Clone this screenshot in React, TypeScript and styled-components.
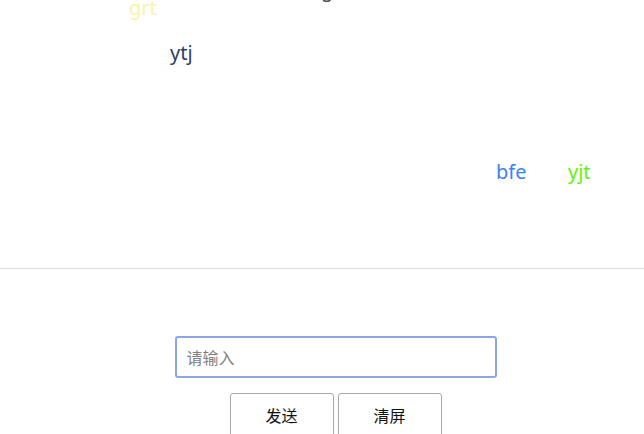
import { useState } from 'react';
import styled, { createGlobalStyle } from 'styled-components';

interface Bullet {
  text: string;
  color: string;
  left: number;
  top: number;
}

const bullets: Bullet[] = [
  { text: 'grt', color: '#fbf4a6', left: 129, top: -6 },
  { text: 'g', color: '#4a4a4a', left: 321, top: -24 },
  { text: 'ytj', color: '#2c3e66', left: 170, top: 39 },
  { text: 'bfe', color: '#3b82f6', left: 496, top: 158 },
  { text: 'yjt', color: '#66f20a', left: 568, top: 158 },
];

const GlobalStyle = createGlobalStyle`
  html, body {
    margin: 0;
    padding: 0;
    background: #fff;
    overflow: hidden;
    font-family: "Noto Sans", "Noto Sans CJK SC", sans-serif;
  }
`;

const Page = styled.div`
  width: 644px;
  height: 434px;
  overflow: hidden;
`;

const Screen = styled.div`
  position: relative;
  height: 268px;
  border-bottom: 1px solid #dcdcdc;
  overflow: hidden;
`;

const BulletText = styled.span<{ $color: string }>`
  position: absolute;
  font-size: 20px;
  line-height: 28px;
  white-space: nowrap;
  color: ${({ $color }) => $color};
`;

const Controls = styled.div`
  display: flex;
  flex-direction: column;
  align-items: center;
  padding: 67px 0 0 27px;
  gap: 15px;
`;

const TextInput = styled.input`
  box-sizing: border-box;
  width: 322px;
  height: 42px;
  padding: 0 10px;
  border: 2px solid #89a7e6;
  border-radius: 3px;
  outline: none;
  font-size: 16px;
  font-family: "Noto Sans CJK SC", sans-serif;
  color: #333;
  &::placeholder {
    color: #808080;
  }
`;

const ButtonRow = styled.div`
  display: flex;
  gap: 4px;
`;

const Button = styled.button`
  box-sizing: border-box;
  width: 104px;
  height: 46px;
  padding: 0 0 2px;
  background: #fff;
  border: 1px solid #a9a9a9;
  border-radius: 3px;
  font-size: 16px;
  font-family: "Noto Sans CJK SC", sans-serif;
  color: #111;
  cursor: pointer;
`;

const App = () => {
  const [value, setValue] = useState('');
  return (
    <Page>
      <GlobalStyle />
      <Screen>
        {bullets.map((b, i) => (
          <BulletText key={i} $color={b.color} style={{ left: b.left, top: b.top }}>
            {b.text}
          </BulletText>
        ))}
      </Screen>
      <Controls>
        <TextInput
          placeholder="请输入"
          value={value}
          onChange={(e) => setValue(e.target.value)}
        />
        <ButtonRow>
          <Button>发送</Button>
          <Button>清屏</Button>
        </ButtonRow>
      </Controls>
    </Page>
  );
};

export default App;
